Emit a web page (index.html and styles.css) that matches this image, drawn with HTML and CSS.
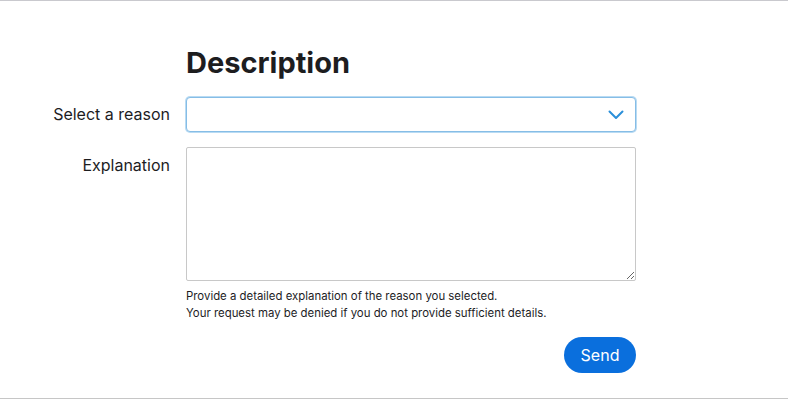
FILE: index.html
```html
<!DOCTYPE html>
<html>
<head>
<meta charset="utf-8">
<link rel="stylesheet" href="styles.css">
</head>
<body>
<div class="page">
  <form class="form">
    <div></div>
    <h1 class="title">Description</h1>

    <label class="label label-select" for="reason">Select a reason</label>
    <div class="select-wrap">
      <select id="reason" class="select"><option></option></select>
      <svg class="chevron" width="16" height="10" viewBox="0 0 16 10"><path d="M1.5 1.5 L8 8 L14.5 1.5" fill="none" stroke="#2b8fd9" stroke-width="2" stroke-linecap="round" stroke-linejoin="round"/></svg>
    </div>

    <label class="label label-text" for="expl">Explanation</label>
    <div class="field">
      <textarea id="expl" class="textarea"></textarea>
      <p class="help">Provide a detailed explanation of the reason you selected.<br>Your request may be denied if you do not provide sufficient details.</p>
      <div class="actions"><button type="button" class="send">Send</button></div>
    </div>
  </form>
</div>
</body>
</html>
```
FILE: styles.css
```css
html, body {
  margin: 0;
  padding: 0;
  background: #fff;
}
body {
  font-family: Inter, "Liberation Sans", sans-serif;
  color: #1d1d1f;
}
.page {
  box-sizing: border-box;
  height: 399px;
  border-top: 1px solid #c9c9ce;
  border-bottom: 1px solid #c6c6c6;
  padding-top: 41px;
}
.form {
  display: grid;
  grid-template-columns: 162px 450px;
  column-gap: 16px;
  margin-left: 8px;
  align-items: start;
}
.title {
  margin: 0 0 14px;
  font-size: 29px;
  line-height: 41px;
  font-weight: 700;
  color: #1d1d1f;
  letter-spacing: 0;
}
.label {
  text-align: right;
  font-size: 16px;
  color: #1d1d1f;
}
.label-select {
  line-height: 35px;
}
.label-text {
  line-height: 20px;
  padding-top: 8px;
  margin-top: 15px;
}
.select-wrap {
  position: relative;
  height: 35px;
}
.select {
  appearance: none;
  -webkit-appearance: none;
  box-sizing: border-box;
  width: 100%;
  height: 35px;
  margin: 0;
  border: 1px solid #86bde6;
  border-radius: 4px;
  box-shadow: 0 0 0 1px #b9dbf3;
  background: #fff;
  outline: none;
}
.chevron {
  position: absolute;
  right: 12px;
  top: 13px;
  pointer-events: none;
}
.field {
  margin-top: 15px;
}
.textarea {
  display: block;
  box-sizing: border-box;
  width: 450px;
  height: 134px;
  margin: 0;
  border: 1px solid #c8c8c8;
  border-radius: 2px;
  resize: vertical;
  outline: none;
  font-family: inherit;
}
.help {
  margin: 7px 0 0;
  font-size: 11.4px;
  line-height: 17px;
  color: #1d1d1f;
}
.actions {
  display: flex;
  justify-content: flex-end;
  margin-top: 15px;
}
.send {
  height: 36px;
  width: 72px;
  border: none;
  border-radius: 18px;
  background: #0a6fdd;
  color: #fff;
  font-family: inherit;
  font-size: 16px;
  padding: 0;
}
```
